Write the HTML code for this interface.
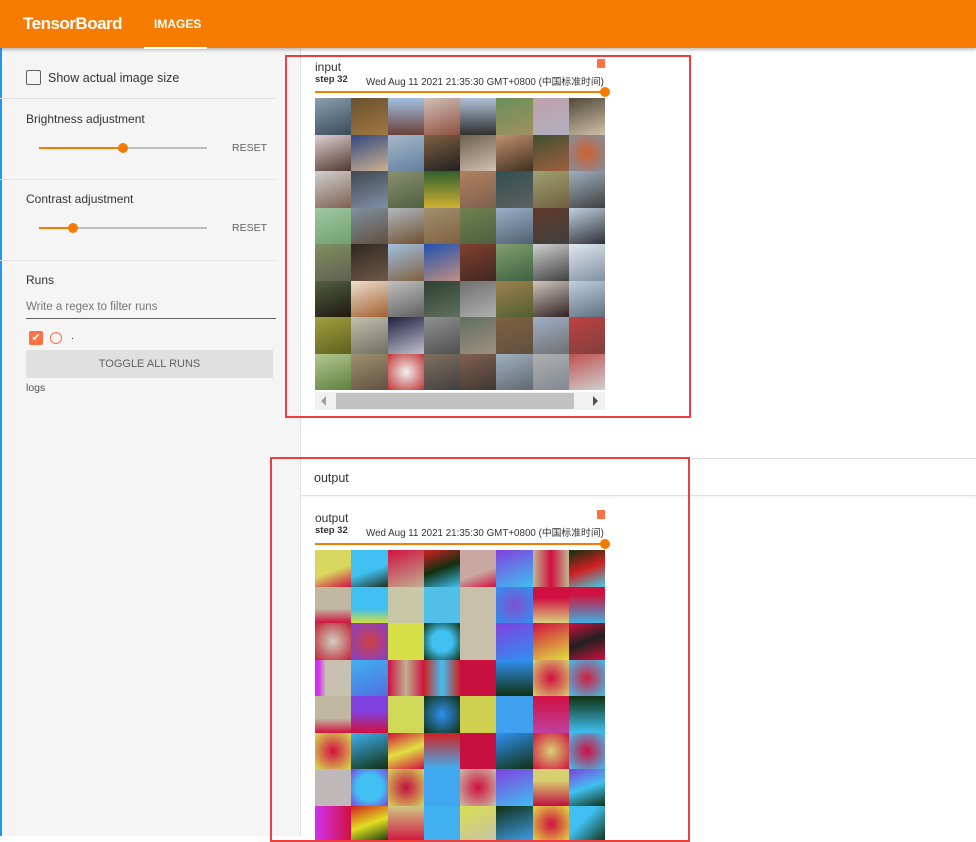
<!DOCTYPE html>
<html><head><meta charset="utf-8"><style>
*{box-sizing:border-box;margin:0;padding:0}
body{width:976px;height:836px;overflow:hidden;background:#fff;font-family:"Liberation Sans","Noto Sans CJK SC",sans-serif;position:relative;color:#212121}
.hdr{position:absolute;left:0;top:0;width:976px;height:48px;background:#f57c00;box-shadow:0 2px 3px rgba(0,0,0,.25);z-index:5}
.logo{position:absolute;left:23px;top:14px;color:#fff;font-size:17px;font-weight:bold;letter-spacing:-.5px}
.tab{position:absolute;left:154px;top:17px;color:#fff;font-size:12px;font-weight:bold}
.tabline{position:absolute;left:144px;top:47px;width:63px;height:2px;background:#fff}
.side{position:absolute;left:0;top:48px;width:301px;height:788px;background:#f5f5f5;border-right:1px solid #e0e0e0}
.side:before{content:"";position:absolute;left:0;top:0;width:2px;height:788px;background:#2196f3}
.abs{position:absolute}
.sep{position:absolute;left:0;width:275px;height:1px;background:#e0e0e0}
.lbl{font-size:12px;color:#333}
.track{position:absolute;height:2px;background:#bdbdbd;width:168px;left:39px}
.fill{position:absolute;height:2px;background:#f57c00;left:39px}
.knob{position:absolute;width:10px;height:10px;border-radius:50%;background:#f57c00}
.reset{position:absolute;left:232px;font-size:10.5px;color:#616161}
.redbox{position:absolute;border:2px solid #f03c3c}
.grid{position:absolute;display:grid;grid-template-columns:repeat(8,36.25px);grid-auto-rows:36.5px}
.grid div{width:100%;height:100%}
.ttl{font-size:12px;color:#333}
.meta{font-size:9.8px;color:#333}
</style></head><body>
<div class="hdr"><div class="logo">TensorBoard</div><div class="tab">IMAGES</div><div class="tabline"></div></div>
<div class="side">
 <div class="abs" style="left:26px;top:22px;width:15px;height:15px;border:1.5px solid #616161;border-radius:2px"></div>
 <div class="abs lbl" style="left:48px;top:23px;font-size:12.5px">Show actual image size</div>
 <div class="sep" style="top:50px"></div>
 <div class="abs lbl" style="left:26px;top:64px">Brightness adjustment</div>
 <div class="track" style="top:99px"></div><div class="fill" style="top:99px;width:84px"></div><div class="knob" style="left:118px;top:95px"></div>
 <div class="reset" style="top:94px">RESET</div>
 <div class="sep" style="top:131px"></div>
 <div class="abs lbl" style="left:26px;top:144px">Contrast adjustment</div>
 <div class="track" style="top:179px"></div><div class="fill" style="top:179px;width:34px"></div><div class="knob" style="left:68px;top:175px"></div>
 <div class="reset" style="top:174px">RESET</div>
 <div class="sep" style="top:212px"></div>
 <div class="abs lbl" style="left:26px;top:225px">Runs</div>
 <div class="abs" style="left:26px;top:253px;font-size:11.5px;color:#757575">Write a regex to filter runs</div>
 <div class="abs" style="left:26px;top:270px;width:250px;height:1px;background:#616161"></div>
 <div class="abs" style="left:29px;top:283px;width:14px;height:14px;background:#ff7043;border-radius:2px;color:#fff;font-size:11px;line-height:14px;text-align:center">✔</div>
 <div class="abs" style="left:50px;top:284px;width:12px;height:12px;border:1.5px solid #ff7043;border-radius:50%"></div>
 <div class="abs" style="left:71px;top:283px;font-size:10px">.</div>
 <div class="abs" style="left:26px;top:302px;width:247px;height:28px;background:#e0e0e0;border-radius:2px;font-size:11px;color:#616161;text-align:center;line-height:28px">TOGGLE ALL RUNS</div>
 <div class="abs" style="left:26px;top:334px;font-size:10.5px;color:#555">logs</div>
</div>

<!-- input card -->
<div class="abs ttl" style="left:315px;top:60px">input</div>
<div class="abs meta" style="left:315px;top:74px;font-size:9.5px"><b>step 32</b></div>
<div class="abs meta" style="left:366px;top:74px">Wed Aug 11 2021 21:35:30 GMT+0800 (中国标准时间)</div>
<div class="abs" style="left:597px;top:59px;width:8px;height:9px;background:#ff7043"></div>
<div class="abs" style="left:315px;top:91px;width:288px;height:2px;background:#f57c00"></div>
<div class="knob" style="left:600px;top:87px"></div>
<div class="grid" style="left:315px;top:98px">
<div style="background:linear-gradient(160deg,#8aa0b0,#3a4a58)"></div><div style="background:linear-gradient(160deg,#6a5030,#a07840)"></div><div style="background:linear-gradient(180deg,#a0c0e0,#6a4038)"></div><div style="background:linear-gradient(160deg,#d0c0b8,#905040)"></div><div style="background:linear-gradient(180deg,#b0c0d8,#303030)"></div><div style="background:linear-gradient(160deg,#6a9058,#a09060)"></div><div style="background:linear-gradient(160deg,#c0a0a8,#b0b0c0)"></div><div style="background:linear-gradient(160deg,#504838,#d0c0a8)"></div>
<div style="background:linear-gradient(160deg,#e0d0d0,#503830)"></div><div style="background:linear-gradient(160deg,#304880,#d0b090)"></div><div style="background:linear-gradient(160deg,#a8b8c8,#6080a0)"></div><div style="background:linear-gradient(160deg,#806040,#202020)"></div><div style="background:linear-gradient(160deg,#706050,#d0c0b0)"></div><div style="background:linear-gradient(160deg,#c09070,#403020)"></div><div style="background:linear-gradient(160deg,#405030,#a06040)"></div><div style="background:radial-gradient(#d06030,#8090a0)"></div>
<div style="background:linear-gradient(160deg,#d0d0d0,#806050)"></div><div style="background:linear-gradient(160deg,#404850,#8090a8)"></div><div style="background:linear-gradient(160deg,#8a9070,#506040)"></div><div style="background:linear-gradient(180deg,#306030,#d0b030)"></div><div style="background:linear-gradient(160deg,#b08060,#806050)"></div><div style="background:linear-gradient(160deg,#305050,#606060)"></div><div style="background:linear-gradient(160deg,#a0a070,#706040)"></div><div style="background:linear-gradient(160deg,#a0b0c0,#404040)"></div>
<div style="background:linear-gradient(160deg,#a0c8a0,#70a070)"></div><div style="background:linear-gradient(160deg,#8090a0,#605040)"></div><div style="background:linear-gradient(160deg,#b0b8c0,#705030)"></div><div style="background:linear-gradient(160deg,#a09070,#806040)"></div><div style="background:linear-gradient(160deg,#708050,#506040)"></div><div style="background:linear-gradient(160deg,#9ab0c8,#506070)"></div><div style="background:linear-gradient(160deg,#603828,#404040)"></div><div style="background:linear-gradient(160deg,#c0d0e0,#303038)"></div>
<div style="background:linear-gradient(160deg,#809060,#606050)"></div><div style="background:linear-gradient(160deg,#302820,#705848)"></div><div style="background:linear-gradient(160deg,#a0c0e0,#806040)"></div><div style="background:linear-gradient(160deg,#2050b0,#c09080)"></div><div style="background:linear-gradient(160deg,#804030,#402820)"></div><div style="background:linear-gradient(160deg,#80a070,#406040)"></div><div style="background:linear-gradient(160deg,#d0d0d0,#404040)"></div><div style="background:linear-gradient(160deg,#e0e8f0,#8090a0)"></div>
<div style="background:linear-gradient(160deg,#506040,#201810)"></div><div style="background:linear-gradient(160deg,#f0e0d0,#a06030)"></div><div style="background:linear-gradient(160deg,#c0c0c0,#606060)"></div><div style="background:linear-gradient(160deg,#304030,#607060)"></div><div style="background:linear-gradient(160deg,#707070,#b0b0b0)"></div><div style="background:linear-gradient(160deg,#a08050,#506030)"></div><div style="background:linear-gradient(160deg,#d0c8c0,#302020)"></div><div style="background:linear-gradient(160deg,#c0d0e0,#607080)"></div>
<div style="background:linear-gradient(160deg,#a0a040,#606020)"></div><div style="background:linear-gradient(160deg,#c0c0b0,#707060)"></div><div style="background:linear-gradient(160deg,#202040,#c0c0d0)"></div><div style="background:linear-gradient(160deg,#909090,#505050)"></div><div style="background:linear-gradient(160deg,#607060,#a09080)"></div><div style="background:linear-gradient(160deg,#806040,#605040)"></div><div style="background:linear-gradient(160deg,#a0b0c8,#707070)"></div><div style="background:linear-gradient(160deg,#c04040,#804040)"></div>
<div style="background:linear-gradient(160deg,#b0c890,#608040)"></div><div style="background:linear-gradient(160deg,#a09070,#605040)"></div><div style="background:radial-gradient(#f0f0f0,#c03030)"></div><div style="background:linear-gradient(160deg,#807060,#404040)"></div><div style="background:linear-gradient(160deg,#806050,#403830)"></div><div style="background:linear-gradient(160deg,#a0b0c0,#606870)"></div><div style="background:linear-gradient(160deg,#b0b0b0,#808890)"></div><div style="background:linear-gradient(160deg,#c05050,#d0d0d0)"></div>
</div>
<div class="abs" style="left:315px;top:392px;width:290px;height:18px;background:#f1f1f1"></div>
<div class="abs" style="left:336px;top:393px;width:238px;height:16px;background:#c1c1c1"></div>
<div class="abs" style="left:321px;top:396px;width:0;height:0;border-top:5px solid transparent;border-bottom:5px solid transparent;border-right:5px solid #a0a0a0"></div>
<div class="abs" style="left:593px;top:396px;width:0;height:0;border-top:5px solid transparent;border-bottom:5px solid transparent;border-left:5px solid #505050"></div>
<div class="redbox" style="left:285px;top:55px;width:406px;height:363px"></div>

<!-- output section -->
<div class="abs" style="left:301px;top:458px;width:675px;height:1px;background:#e0e0e0"></div>
<div class="abs" style="left:301px;top:495px;width:675px;height:1px;background:#e0e0e0;box-shadow:0 1px 2px rgba(0,0,0,.1)"></div>
<div class="abs" style="left:314px;top:471px;font-size:12.5px;color:#333">output</div>
<div class="abs ttl" style="left:315px;top:511px">output</div>
<div class="abs meta" style="left:315px;top:525px;font-size:9.5px"><b>step 32</b></div>
<div class="abs meta" style="left:366px;top:525px">Wed Aug 11 2021 21:35:30 GMT+0800 (中国标准时间)</div>
<div class="abs" style="left:597px;top:510px;width:8px;height:9px;background:#ff7043"></div>
<div class="abs" style="left:315px;top:543px;width:288px;height:2px;background:#f57c00"></div>
<div class="knob" style="left:600px;top:539px"></div>
<div class="grid" style="left:315px;top:550px">
<div style="background:linear-gradient(160deg,#d8d860 55%,#d01040)"></div><div style="background:linear-gradient(160deg,#40c0f0 55%,#203020)"></div><div style="background:linear-gradient(160deg,#d01040,#c0b090)"></div><div style="background:linear-gradient(160deg,#d02020,#103010 50%,#40c0f0)"></div><div style="background:linear-gradient(160deg,#c8a8a0 60%,#d01040)"></div><div style="background:linear-gradient(160deg,#8040e0,#40c0f0)"></div><div style="background:linear-gradient(90deg,#c0b890,#d01040,#c0b890)"></div><div style="background:linear-gradient(160deg,#103010,#d02020,#40d0e8)"></div>
<div style="background:linear-gradient(180deg,#c0b8a0 60%,#d01040)"></div><div style="background:linear-gradient(180deg,#40c0f0 60%,#d0e040)"></div><div style="background:#c8c8a8"></div><div style="background:#50c0e8"></div><div style="background:#c8c0a8"></div><div style="background:radial-gradient(#8050d0,#3090f0)"></div><div style="background:linear-gradient(180deg,#d01040 30%,#d8d080)"></div><div style="background:linear-gradient(180deg,#d01040 20%,#40b0e0)"></div>
<div style="background:radial-gradient(#d0d0c0,#c02030)"></div><div style="background:radial-gradient(#d04040,#8040d0)"></div><div style="background:#d8e048"></div><div style="background:radial-gradient(#40c0f0 40%,#103010)"></div><div style="background:#c8c0a8"></div><div style="background:linear-gradient(160deg,#8040e0,#3090f0)"></div><div style="background:linear-gradient(160deg,#d01040,#e0e040)"></div><div style="background:linear-gradient(160deg,#d01040,#202020,#d01040)"></div>
<div style="background:linear-gradient(90deg,#d030f0 10%,#c8c0b0 30%)"></div><div style="background:linear-gradient(160deg,#40b0f0,#5070e0)"></div><div style="background:linear-gradient(90deg,#d01040,#c0b090,#d01040)"></div><div style="background:linear-gradient(90deg,#d02020,#40c0f0,#d02020)"></div><div style="background:#c81040"></div><div style="background:linear-gradient(180deg,#3090f0,#103010)"></div><div style="background:radial-gradient(#d01040,#d8d070)"></div><div style="background:radial-gradient(#d02040,#40c0f0)"></div>
<div style="background:linear-gradient(180deg,#c0b8a0 60%,#d01040)"></div><div style="background:linear-gradient(180deg,#8040e0 40%,#d01040)"></div><div style="background:#d0d858"></div><div style="background:radial-gradient(#3090f0,#103010)"></div><div style="background:#d0d050"></div><div style="background:#40a0f0"></div><div style="background:linear-gradient(180deg,#d01040,#c040a0)"></div><div style="background:linear-gradient(180deg,#103010,#40c0f0)"></div>
<div style="background:radial-gradient(#d01040,#d8e050)"></div><div style="background:linear-gradient(160deg,#40b0f0,#103010)"></div><div style="background:linear-gradient(160deg,#d01040,#e0e040,#d01040)"></div><div style="background:linear-gradient(180deg,#d02020,#40b0f0)"></div><div style="background:#c81040"></div><div style="background:linear-gradient(160deg,#3090f0,#103010)"></div><div style="background:radial-gradient(#d8d070,#d01040)"></div><div style="background:radial-gradient(#d01040,#40c0f0)"></div>
<div style="background:#c0b8b8"></div><div style="background:radial-gradient(#40c0f0 50%,#8040e0)"></div><div style="background:radial-gradient(#c01040,#d8d858)"></div><div style="background:#40a8f0"></div><div style="background:radial-gradient(#d01040,#c8c0a8)"></div><div style="background:linear-gradient(160deg,#8040e0,#40c0f0)"></div><div style="background:linear-gradient(180deg,#d8d070 30%,#c01040)"></div><div style="background:linear-gradient(160deg,#8040e0,#40c0f0,#103010)"></div>
<div style="background:linear-gradient(90deg,#d030f0,#d01040)"></div><div style="background:linear-gradient(160deg,#d02020,#e0e020,#103010)"></div><div style="background:linear-gradient(180deg,#d0c880,#d01040)"></div><div style="background:#40b0f0"></div><div style="background:linear-gradient(160deg,#d8e050,#c8c0a8)"></div><div style="background:linear-gradient(160deg,#103010,#40a0f0)"></div><div style="background:radial-gradient(#d01040,#e0e040)"></div><div style="background:linear-gradient(135deg,#40c0f0 40%,#103010)"></div>
</div>
<div class="redbox" style="left:270px;top:457px;width:420px;height:385px"></div>
</body></html>
